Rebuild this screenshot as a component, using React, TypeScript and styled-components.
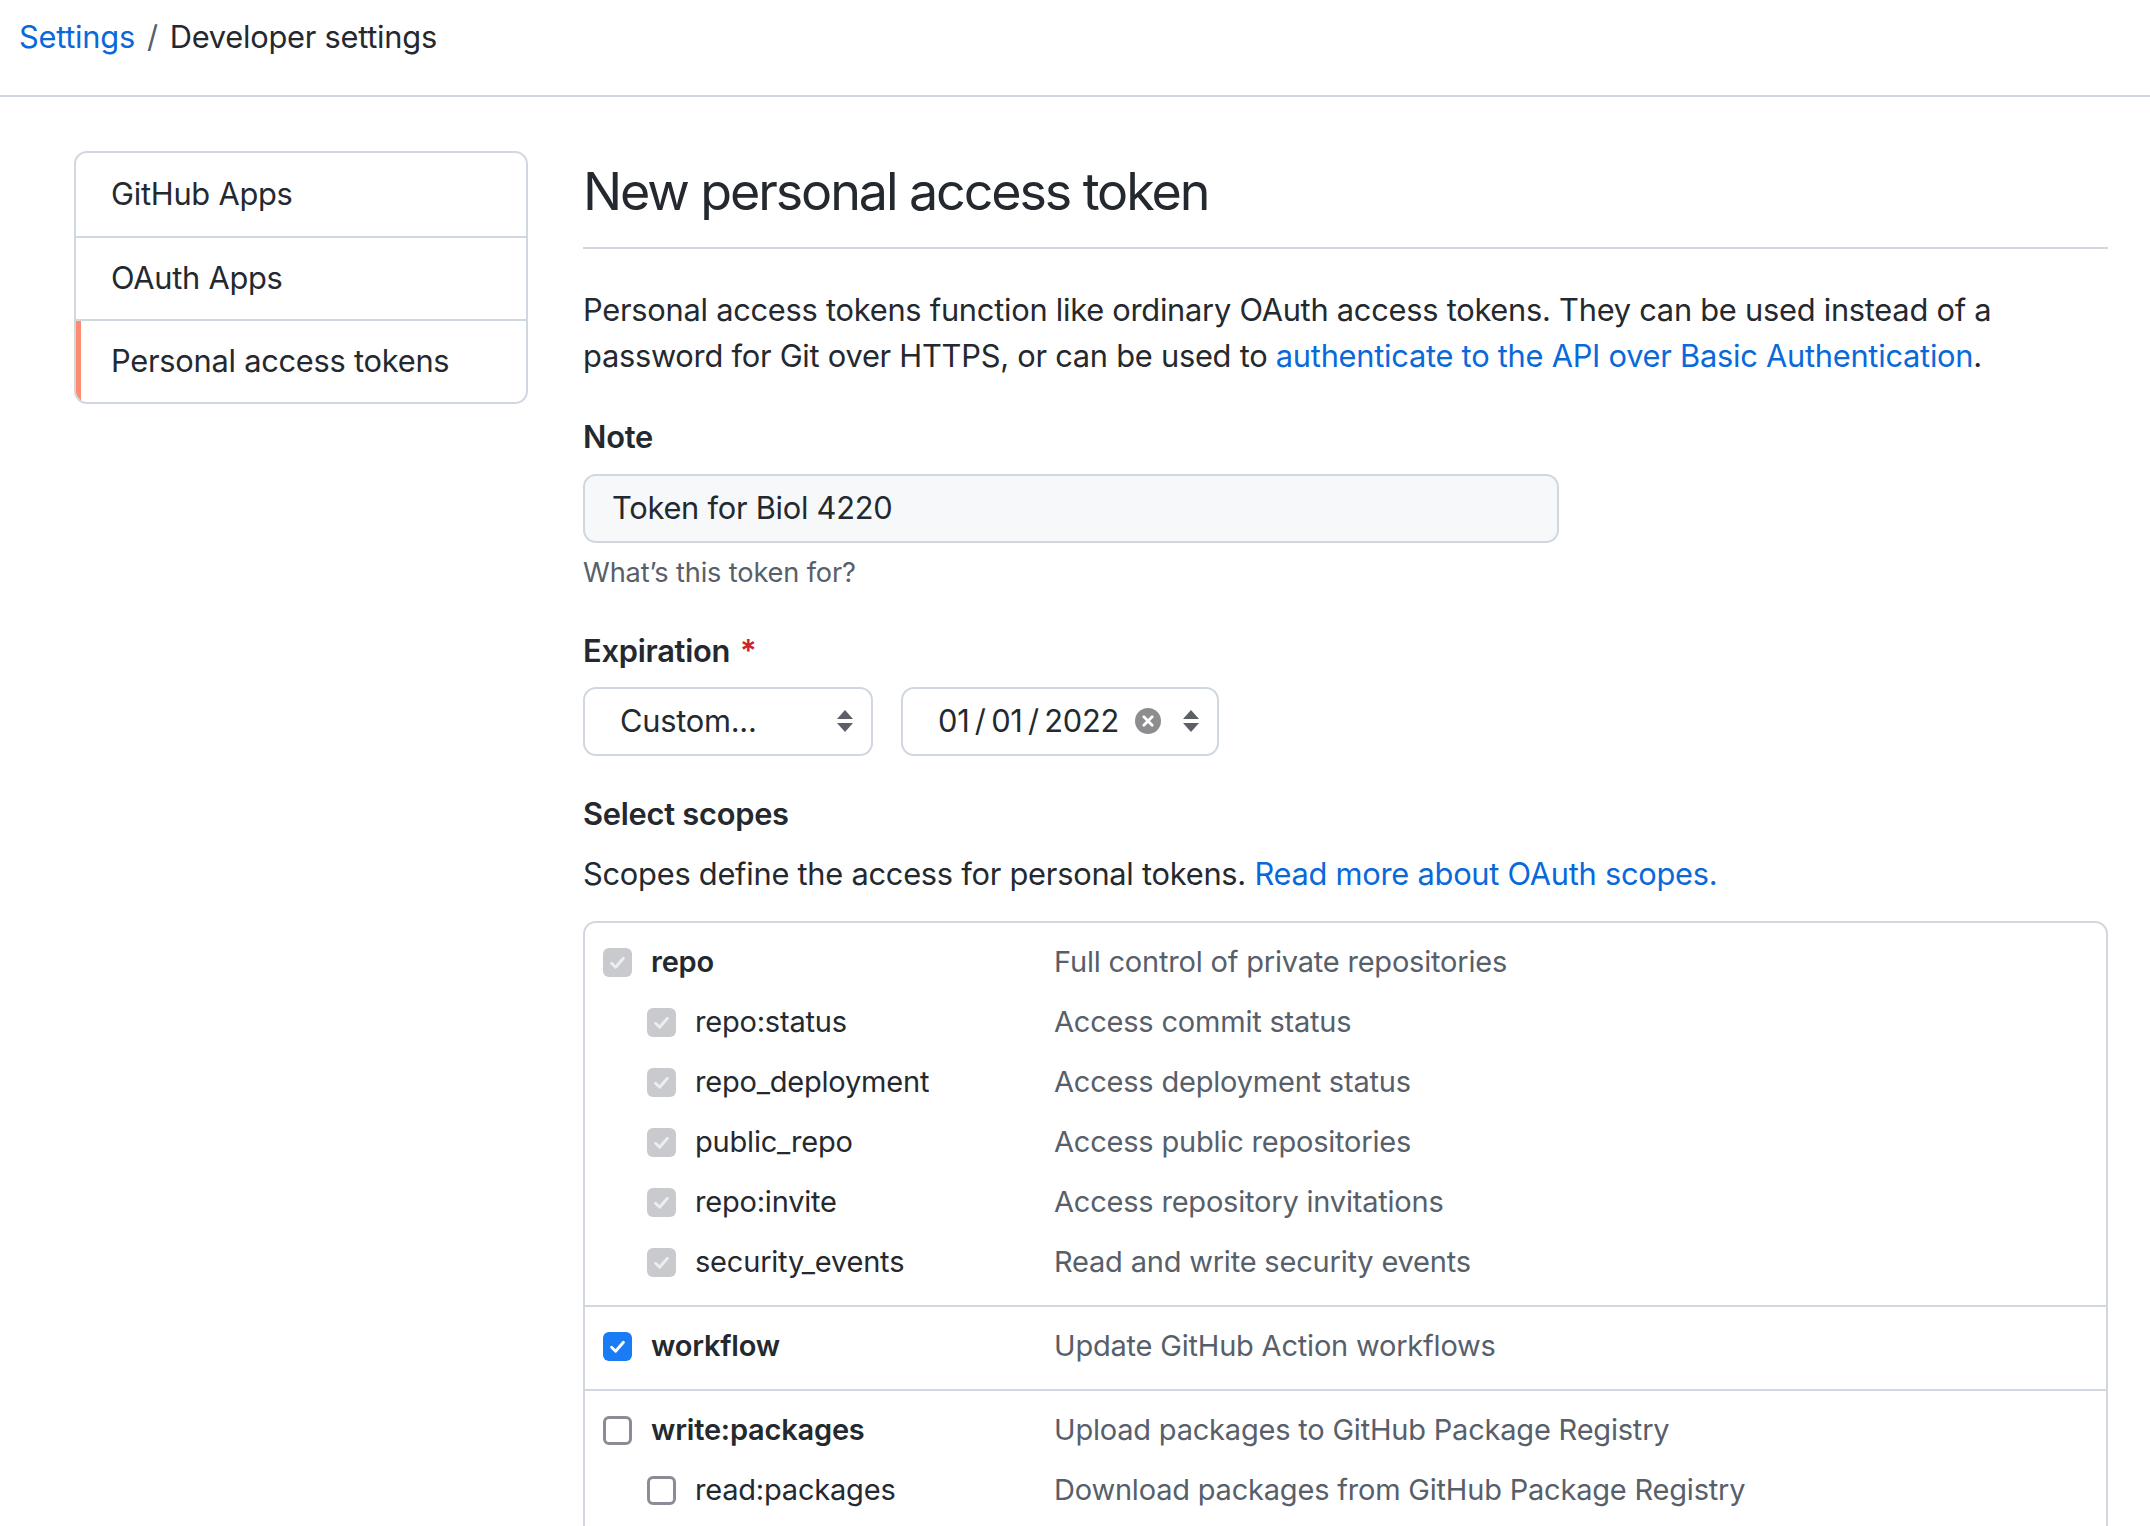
import React from 'react';
import styled, { createGlobalStyle } from 'styled-components';

const GlobalStyle = createGlobalStyle`
  html, body {
    margin: 0;
    padding: 0;
    background: #ffffff;
  }
  body {
    font-family: Inter, "Noto Sans", "Liberation Sans", sans-serif;
    font-size: 30.8px;
    line-height: 46.4px;
    letter-spacing: -0.25px;
    color: #24292f;
  }
  * { box-sizing: border-box; }
`;

const Header = styled.header`
  padding: 14px 19px 35px;
  border-bottom: 2px solid #d0d7de;
`;

const Breadcrumb = styled.nav`
  display: flex;
  align-items: center;
  height: 46px;
`;

const CrumbLink = styled.a`
  color: #0969da;
  text-decoration: none;
`;

const CrumbSep = styled.span`
  color: #57606a;
  margin: 0 12px;
`;

const Layout = styled.div`
  display: flex;
  align-items: flex-start;
  gap: 55px;
  padding: 54px 42px 0 74px;
`;

const Sidebar = styled.nav`
  flex: 0 0 454px;
  border: 2px solid #d0d7de;
  border-radius: 13px;
  overflow: hidden;
`;

const MenuItem = styled.a<{ $active?: boolean }>`
  position: relative;
  display: flex;
  align-items: center;
  height: 83px;
  padding: 0 35px;
  color: #24292f;
  text-decoration: none;
  & + & { border-top: 2px solid #d0d7de; }

  &::before {
    content: '';
    position: absolute;
    left: 0;
    top: 0;
    bottom: 0;
    width: 5px;
    background: ${({ $active }) => ($active ? '#fd8c73' : 'transparent')};
  }
`;

const Main = styled.main`
  flex: 1 1 auto;
  min-width: 0;
`;

const Subhead = styled.div`
  padding-top: 8px;
  padding-bottom: 22px;
  border-bottom: 2px solid #d0d7de;
`;

const Title = styled.h1`
  margin: 0;
  font-size: 52px;
  line-height: 66px;
  font-weight: 400;
  letter-spacing: -2.1px;
`;

const Intro = styled.p`
  margin: 38px 0 0;
`;

const Link = styled.a`
  color: #0969da;
  text-decoration: none;
`;

const FieldLabel = styled.div<{ $gap?: number }>`
  margin-top: ${({ $gap }) => $gap ?? 34}px;
  font-weight: 600;
  line-height: 46px;
`;

const Required = styled.span`
  color: #cf222e;
  margin-left: 10px;
`;

const TextInput = styled.div`
  margin-top: 14px;
  width: 976px;
  height: 69px;
  display: flex;
  align-items: center;
  padding: 0 27px;
  background: #f6f8fa;
  border: 2px solid #d0d7de;
  border-radius: 13px;
`;

const Hint = styled.div`
  margin-top: 10px;
  font-size: 27.2px;
  line-height: 40px;
  letter-spacing: -0.15px;
  color: #57606a;
`;

const SelectRow = styled.div`
  margin-top: 13px;
  display: flex;
  gap: 28px;
`;

const SelectBox = styled.div<{ $width: number }>`
  width: ${({ $width }) => $width}px;
  height: 69px;
  display: flex;
  align-items: center;
  padding: 0 18px 0 35px;
  border: 2px solid #d0d7de;
  border-radius: 13px;
  background: #ffffff;
`;

const SelectText = styled.span`
  flex: 1 1 auto;
`;

const DateText = styled.span`
  flex: 1 1 auto;
  word-spacing: -3px;
`;

const ClearIcon = styled.svg`
  width: 26px;
  height: 26px;
  margin-right: 22px;
  flex: 0 0 auto;
`;

const ArrowIcon = styled.svg`
  width: 16px;
  height: 24px;
  flex: 0 0 auto;
`;

const Intro2 = styled.p`
  margin: 14px 0 0;
`;

const ScopesBox = styled.div`
  margin-top: 24px;
  border: 2px solid #d0d7de;
  border-bottom: none;
  border-radius: 13px 13px 0 0;
  font-size: 29px;
  letter-spacing: -0.2px;
`;

const ScopeGroup = styled.div`
  padding: 9px 0 13px;
  & + & { border-top: 2px solid #d0d7de; }
`;

const ScopeRow = styled.div`
  display: grid;
  grid-template-columns: 469px 1fr;
  align-items: center;
  height: 60px;
`;

const ScopeName = styled.label<{ $nested?: boolean }>`
  display: flex;
  align-items: center;
  gap: 19px;
  padding-left: ${({ $nested }) => ($nested ? 62 : 18)}px;
  font-weight: ${({ $nested }) => ($nested ? 400 : 600)};
`;

const ScopeDesc = styled.span`
  color: #57606a;
`;

type BoxState = 'disabled' | 'checked' | 'empty';

const Box = styled.span<{ $state: BoxState }>`
  flex: 0 0 auto;
  width: 29px;
  height: 29px;
  border-radius: 6px;
  display: inline-flex;
  align-items: center;
  justify-content: center;
  background: ${({ $state }) =>
    $state === 'disabled' ? '#c9cace' : $state === 'checked' ? '#1a7cf5' : '#ffffff'};
  border: ${({ $state }) => ($state === 'empty' ? '3px solid #8c8c96' : 'none')};
`;

function Checkbox({ state }: { state: BoxState }) {
  return (
    <Box $state={state}>
      {state !== 'empty' && (
        <svg width="19" height="19" viewBox="0 0 16 16">
          <path
            d="M3 8.6 L6.4 12 L13 4.4"
            fill="none"
            stroke={state === 'disabled' ? '#eeeef0' : '#ffffff'}
            strokeWidth="2.4"
            strokeLinecap="round"
            strokeLinejoin="round"
          />
        </svg>
      )}
    </Box>
  );
}

function Arrows() {
  return (
    <ArrowIcon viewBox="0 0 16 24">
      <path d="M0 10 L8 1 L16 10 Z" fill="#5c6066" />
      <path d="M0 14 L16 14 L8 23 Z" fill="#5c6066" />
    </ArrowIcon>
  );
}

interface Scope {
  name: string;
  desc: string;
  nested?: boolean;
  state: BoxState;
}

const GROUPS: Scope[][] = [
  [
    { name: 'repo', desc: 'Full control of private repositories', state: 'disabled' },
    { name: 'repo:status', desc: 'Access commit status', nested: true, state: 'disabled' },
    { name: 'repo_deployment', desc: 'Access deployment status', nested: true, state: 'disabled' },
    { name: 'public_repo', desc: 'Access public repositories', nested: true, state: 'disabled' },
    { name: 'repo:invite', desc: 'Access repository invitations', nested: true, state: 'disabled' },
    { name: 'security_events', desc: 'Read and write security events', nested: true, state: 'disabled' },
  ],
  [{ name: 'workflow', desc: 'Update GitHub Action workflows', state: 'checked' }],
  [
    { name: 'write:packages', desc: 'Upload packages to GitHub Package Registry', state: 'empty' },
    { name: 'read:packages', desc: 'Download packages from GitHub Package Registry', nested: true, state: 'empty' },
  ],
];

export default function App() {
  return (
    <>
      <GlobalStyle />
      <Header>
        <Breadcrumb>
          <CrumbLink href="#">Settings</CrumbLink>
          <CrumbSep>/</CrumbSep>
          <span>Developer settings</span>
        </Breadcrumb>
      </Header>
      <Layout>
        <Sidebar>
          <MenuItem href="#">GitHub Apps</MenuItem>
          <MenuItem href="#">OAuth Apps</MenuItem>
          <MenuItem href="#" $active>Personal access tokens</MenuItem>
        </Sidebar>
        <Main>
          <Subhead>
            <Title>New personal access token</Title>
          </Subhead>
          <Intro>
            Personal access tokens function like ordinary OAuth access tokens. They can be used instead of a
            <br />
            password for Git over HTTPS, or can be used to{' '}
            <Link href="#">authenticate to the API over Basic Authentication</Link>.
          </Intro>

          <FieldLabel>Note</FieldLabel>
          <TextInput>Token for Biol 4220</TextInput>
          <Hint>What’s this token for?</Hint>

          <FieldLabel $gap={35}>
            Expiration<Required>*</Required>
          </FieldLabel>
          <SelectRow>
            <SelectBox $width={290}>
              <SelectText>Custom...</SelectText>
              <Arrows />
            </SelectBox>
            <SelectBox $width={318}>
              <DateText>01 / 01 / 2022</DateText>
              <ClearIcon viewBox="0 0 26 26">
                <circle cx="13" cy="13" r="13" fill="#8d8d8f" />
                <path d="M8.8 8.8 L17.2 17.2 M17.2 8.8 L8.8 17.2" stroke="#fff" strokeWidth="2.8" strokeLinecap="round" />
              </ClearIcon>
              <Arrows />
            </SelectBox>
          </SelectRow>

          <FieldLabel $gap={35}>Select scopes</FieldLabel>
          <Intro2>
            Scopes define the access for personal tokens.{' '}
            <Link href="#">Read more about OAuth scopes.</Link>
          </Intro2>

          <ScopesBox>
            {GROUPS.map((group, gi) => (
              <ScopeGroup key={gi}>
                {group.map(s => (
                  <ScopeRow key={s.name}>
                    <ScopeName $nested={s.nested}>
                      <Checkbox state={s.state} />
                      {s.name}
                    </ScopeName>
                    <ScopeDesc>{s.desc}</ScopeDesc>
                  </ScopeRow>
                ))}
              </ScopeGroup>
            ))}
          </ScopesBox>
        </Main>
      </Layout>
    </>
  );
}
